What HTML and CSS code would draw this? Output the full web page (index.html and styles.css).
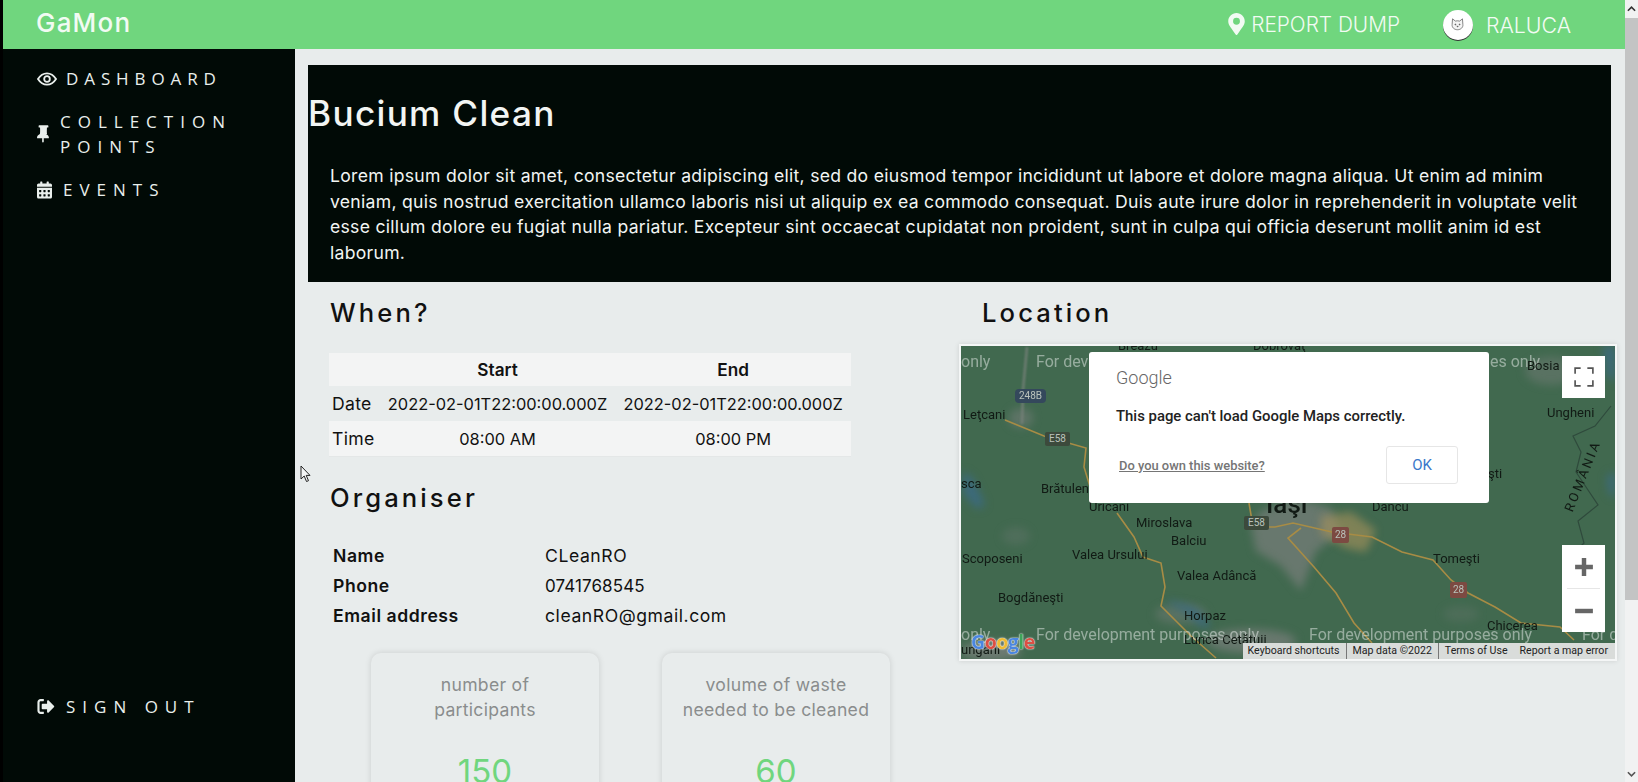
FILE: index.html
```html
<!DOCTYPE html>
<html lang="en">
<head>
    <meta charset="UTF-8">
    <meta name="viewport" content="width=device-width, initial-scale=1.0">
    <title>GaMon</title>
    <link rel="stylesheet" href="styles.css">
</head>
<body>
    <div class="app">
        <header class="topbar">
            <div class="brand">GaMon</div>
            <div class="topbar-right">
                <a class="report-link">
                    <svg class="pin-icon" viewBox="0 0 384 512"><path fill="currentColor" d="M172 502C27 291 0 262 0 192 0 86 86 0 192 0s192 86 192 192c0 70-27 99-172 310-9 14-31 14-40 0zm20-230a80 80 0 1 0 0-160 80 80 0 0 0 0 160z"/></svg>
                    REPORT DUMP
                </a>
                <div class="user">
                    <div class="avatar">
                        <svg viewBox="0 0 24 24" fill="#f4f4f4" stroke="#555" stroke-width="1" stroke-linejoin="round">
                            <path d="M5 4l4 3.2c2-.6 4-.6 6 0L19 4l.6 8c.6 4-3 7.4-7.6 7.4S3.800 16 4.400 12z"/>
                            <circle cx="9" cy="12" r=".7" fill="#444"/>
                            <circle cx="15" cy="12" r=".7" fill="#444"/>
                            <path d="M11 14.500h2l-1 1z" fill="#444"/>
                        </svg>
                    </div>
                    <span>RALUCA</span>
                </div>
            </div>
        </header>

        <div class="layout">
            <nav class="sidebar">
                <div class="nav-list">
                    <a class="nav-item nav-dashboard">
                        <svg class="nav-icon eye-icon" viewBox="0 0 24 16" fill="none" stroke="currentColor" stroke-width="2.2"><path d="M1.200 8C4 3.500 7.800 1.200 12 1.200S20 3.500 22.800 8C20 12.500 16.200 14.800 12 14.800S4 12.500 1.200 8z"/><circle cx="12" cy="8" r="3.4"/></svg>
                        <span>DASHBOARD</span>
                    </a>
                    <a class="nav-item nav-points">
                        <svg class="nav-icon pin-small" viewBox="0 0 384 512"><path fill="currentColor" d="M298 256c-7-40-9-66-4-192h26c9 0 16-7 16-16V16c0-9-7-16-16-16H64c-9 0-16 7-16 16v32c0 9 7 16 16 16h26c5 126 3 152-4 192-48 22-86 60-86 112 0 9 7 16 16 16h136v104l24 24 24-24V384h136c9 0 16-7 16-16 0-52-38-90-86-112z"/></svg>
                        <span>COLLECTION POINTS</span>
                    </a>
                    <a class="nav-item nav-events">
                        <svg class="nav-icon cal-icon" viewBox="0 0 448 512"><path fill="currentColor" d="M0 464c0 26 22 48 48 48h352c26 0 48-22 48-48V192H0zm320-196c0-7 5-12 12-12h40c7 0 12 5 12 12v40c0 7-5 12-12 12h-40c-7 0-12-5-12-12zm0 128c0-7 5-12 12-12h40c7 0 12 5 12 12v40c0 7-5 12-12 12h-40c-7 0-12-5-12-12zM192 268c0-7 5-12 12-12h40c7 0 12 5 12 12v40c0 7-5 12-12 12h-40c-7 0-12-5-12-12zm0 128c0-7 5-12 12-12h40c7 0 12 5 12 12v40c0 7-5 12-12 12h-40c-7 0-12-5-12-12zM64 268c0-7 5-12 12-12h40c7 0 12 5 12 12v40c0 7-5 12-12 12H76c-7 0-12-5-12-12zm0 128c0-7 5-12 12-12h40c7 0 12 5 12 12v40c0 7-5 12-12 12H76c-7 0-12-5-12-12zM400 64h-48V16c0-9-7-16-16-16h-32c-9 0-16 7-16 16v48H160V16c0-9-7-16-16-16h-32c-9 0-16 7-16 16v48H48C22 64 0 86 0 112v48h448v-48c0-26-22-48-48-48z"/></svg>
                        <span>EVENTS</span>
                    </a>
                </div>
                <a class="nav-item nav-signout">
                    <svg class="nav-icon out-icon" viewBox="0 0 512 448"><path fill="currentColor" d="M497 239L329 407c-15 15-41 5-41-17v-86H152c-13 0-24-11-24-24v-112c0-13 11-24 24-24h136V58c0-21 26-32 41-17l168 168c8 9 8 22 0 30zM192 436v-40c0-7-5-12-12-12H96c-18 0-32-14-32-32V96c0-18 14-32 32-32h84c7 0 12-5 12-12V12c0-7-5-12-12-12H96C43 0 0 43 0 96v256c0 53 43 96 96 96h84c7 0 12-5 12-12z"/></svg>
                    <span>SIGN OUT</span>
                </a>
            </nav>

            <main class="content">
                <section class="hero">
                    <h1>Bucium Clean</h1>
                    <p>Lorem ipsum dolor sit amet, consectetur adipiscing elit, sed do eiusmod tempor incididunt ut labore et dolore magna aliqua. Ut enim ad minim veniam, quis nostrud exercitation ullamco laboris nisi ut aliquip ex ea commodo consequat. Duis aute irure dolor in reprehenderit in voluptate velit esse cillum dolore eu fugiat nulla pariatur. Excepteur sint occaecat cupidatat non proident, sunt in culpa qui officia deserunt mollit anim id est laborum.</p>
                </section>

                <div class="columns">
                    <section class="col-left">
                        <h2>When?</h2>
                        <table class="when-table">
                            <tr>
                                <th></th>
                                <th>Start</th>
                                <th>End</th>
                            </tr>
                            <tr>
                                <td class="row-label">Date</td>
                                <td class="center">2022-02-01T22:00:00.000Z</td>
                                <td class="center">2022-02-01T22:00:00.000Z</td>
                            </tr>
                            <tr>
                                <td class="row-label">Time</td>
                                <td class="center">08:00 AM</td>
                                <td class="center">08:00 PM</td>
                            </tr>
                        </table>

                        <h2 class="organiser-title">Organiser</h2>
                        <table class="organiser-table">
                            <tr><th>Name</th><td>CLeanRO</td></tr>
                            <tr><th>Phone</th><td class="phone">0741768545</td></tr>
                            <tr><th>Email address</th><td>cleanRO@gmail.com</td></tr>
                        </table>

                        <div class="stats">
                            <div class="stat-card">
                                <div class="stat-label">number of participants</div>
                                <div class="stat-value">150</div>
                            </div>
                            <div class="stat-card">
                                <div class="stat-label">volume of waste needed to be cleaned</div>
                                <div class="stat-value">60</div>
                            </div>
                        </div>
                    </section>

                    <section class="col-right">
                        <h2>Location</h2>
                        <div class="map">
                            <svg class="map-art" viewBox="0 0 654 313">
                                <g class="soft" fill="#727c76">
                                    <path d="M300 165l35-13 35 10 10 25-25 18-15 40-20-25-25-15-5-25z" opacity=".8"/>
                                    <ellipse cx="55" cy="190" rx="14" ry="9" opacity=".3"/>
                                    <ellipse cx="220" cy="268" rx="26" ry="10" opacity=".5"/>
                                    <ellipse cx="60" cy="72" rx="12" ry="10" opacity=".6"/>
                                    <ellipse cx="500" cy="268" rx="18" ry="8" opacity=".25"/>
                                    <ellipse cx="590" cy="25" rx="26" ry="14" opacity=".5"/>
                                    <ellipse cx="30" cy="305" rx="30" ry="10" opacity=".9"/>
                                    <ellipse cx="290" cy="295" rx="45" ry="12" opacity=".8"/>
                                </g>
                                <path class="soft" d="M360 170l30-4 25 18-10 22-20-4-25-14z" fill="#a8935c" opacity=".6"/>
                                <g class="soft" fill="#3c6a7c">
                                    <path d="M2 125l10 8 12 26-8 4-14-16z"/>
                                    <path d="M208 254l26 8 16 18-8 2-18-16-16-8z"/>
                                    <path d="M642 0h12v36l-8-6z"/>
                                    <path d="M646 130l8-4v26l-6-5z"/>
                                </g>
                                <g fill="none" stroke="#2f4a3c" stroke-width="1.2">
                                    <path d="M650 60l-16 20-22 10 8 16-5 20 12 18 10 15-20 16 6 22-20 20 10 25"/>
                                </g>
                                <path class="soft-line" d="M66 1l-4 43-1 34" fill="none" stroke="#7a837c" stroke-width="2.5" opacity=".8"/>
                                <g fill="none" stroke="#a88c45" stroke-width="1.6">
                                    <path d="M44 74l39 16 42 12-2 19 7 23"/>
                                    <path d="M156 167l17 24 9 20 18 6 4 24-4 19 30 30 25 22"/>
                                    <path d="M288 157l4 24h22l18-4 39 9 40 5 30 15 31 8 18 20 17 13 27 14 26 16 39 4 14 13"/>
                                    <path d="M340 182l-13 10 26 29 22 26 18 30 18 20"/>
                                </g>
                            </svg>

                            <span class="dev-mark mark-a">only</span>
                            <span class="dev-mark mark-b">For dev</span>
                            <span class="dev-mark mark-c">es only</span>
                            <span class="dev-mark mark-d">only</span>
                            <span class="dev-mark mark-e">For development purposes only</span>
                            <span class="dev-mark mark-f">For development purposes only</span>
                            <span class="dev-mark mark-g">For d</span>

                            <span class="place place-1">Breazu</span>
                            <span class="place place-2">Dobrovăţ</span>
                            <span class="place place-3">Bosia</span>
                            <span class="place place-4">Ungheni</span>
                            <span class="place place-5">Leţcani</span>
                            <span class="place place-6">sca</span>
                            <span class="place place-7">Brătuleni</span>
                            <span class="place place-8">Uricani</span>
                            <span class="place place-9">Miroslava</span>
                            <span class="place place-10">Balciu</span>
                            <span class="place place-11">Valea Ursului</span>
                            <span class="place place-12">Scoposeni</span>
                            <span class="place place-13">Valea Adâncă</span>
                            <span class="place place-14">Bogdăneşti</span>
                            <span class="place place-15">Horpaz</span>
                            <span class="place place-16">Tomeşti</span>
                            <span class="place place-17">Chicerea</span>
                            <span class="place place-18">Dancu</span>
                            <span class="place place-19">şti</span>
                            <span class="place place-20">Lunca Cetăţuii</span>
                            <span class="place place-21">ungani</span>
                            <span class="place place-city">Iaşi</span>
                            <span class="place place-country">ROMÂNIA</span>

                            <span class="road-badge badge-blue badge-1">248B</span>
                            <span class="road-badge badge-2">E58</span>
                            <span class="road-badge badge-3">E58</span>
                            <span class="road-badge badge-red badge-4">28</span>
                            <span class="road-badge badge-red badge-5">28</span>

                            <div class="map-btn map-fullscreen">
                                <svg viewBox="0 0 18 18" fill="none" stroke="#555" stroke-width="1.5"><path d="M1 6V1h5M12 1h5v5M17 12v5h-5M6 17H1v-5"/></svg>
                            </div>
                            <div class="map-zoom">
                                <div class="zoom-btn">
                                    <svg viewBox="0 0 18 18"><path fill="#666" d="M7 1h4v6h6v4h-6v6H7v-6H1V7h6z"/></svg>
                                </div>
                                <div class="zoom-sep"></div>
                                <div class="zoom-btn">
                                    <svg viewBox="0 0 18 18"><path fill="#666" d="M1 7h16v4H1z"/></svg>
                                </div>
                            </div>

                            <div class="google-logo"><span class="g-blue">G</span><span class="g-red">o</span><span class="g-yellow">o</span><span class="g-blue">g</span><span class="g-green">l</span><span class="g-red">e</span></div>

                            <div class="attribution">
                                <span>Keyboard shortcuts</span>
                                <span>Map data ©2022</span>
                                <span>Terms of Use</span>
                                <span>Report a map error</span>
                            </div>

                            <div class="map-dialog">
                                <div class="dialog-logo">Google</div>
                                <div class="dialog-text">This page can't load Google Maps correctly.</div>
                                <div class="dialog-actions">
                                    <a class="dialog-link">Do you own this website?</a>
                                    <button class="dialog-ok">OK</button>
                                </div>
                            </div>
                        </div>
                    </section>
                </div>
            </main>
        </div>
    </div>

    <div class="scrollbar">
        <svg class="scroll-arrow" viewBox="0 0 10 6" fill="none" stroke="#333" stroke-width="1.8"><path d="M1 5l4-4 4 4"/></svg>
        <div class="scroll-thumb"></div>
        <svg class="scroll-arrow scroll-arrow-down" viewBox="0 0 10 6" fill="none" stroke="#555" stroke-width="1.8"><path d="M1 1l4 4 4-4"/></svg>
    </div>

    <svg class="cursor" viewBox="0 0 12 18"><path d="M1 1v13l3.200-3 2.300 5.500 2-.8-2.300-5.300H10z" fill="#f4f6f6" stroke="#222" stroke-width="1"/></svg>
</body>
</html>
```

FILE: styles.css
```css
/* General Styles */
* {
    box-sizing: border-box;
}

body {
    margin: 0;
    padding-left: 3px;
    height: 782px;
    display: flex;
    overflow: hidden;
    background: #000;
    font-family: 'Inter', sans-serif;
    color: #111;
}

.app {
    width: 1622px;
    height: 782px;
    display: flex;
    flex-direction: column;
    flex: none;
}

.cursor {
    position: absolute;
    left: 300px;
    top: 465px;
    width: 12px;
    height: 18px;
}

/* Top bar */
.topbar {
    height: 49px;
    flex: none;
    display: flex;
    justify-content: space-between;
    align-items: center;
    padding: 0 54px 0 33px;
    background: #70d67e;
    color: #f2fbf3;
}

.brand {
    font-size: 26px;
    font-weight: 500;
    letter-spacing: 1.2px;
    margin-top: -4px;
}

.topbar-right {
    display: flex;
    align-items: center;
    gap: 43px;
    font-size: 20.8px;
    font-weight: 300;
}

.report-link {
    display: flex;
    align-items: center;
    gap: 6px;
    margin-top: -1px;
}

.pin-icon {
    width: 17px;
    height: 22px;
}

.user {
    display: flex;
    align-items: center;
    gap: 13px;
    font-size: 21.3px;
}

.avatar {
    width: 30px;
    height: 30px;
    border-radius: 50%;
    background: #fff;
    display: flex;
    align-items: center;
    justify-content: center;
    box-shadow: 0 1px 0 #333;
}

.avatar svg {
    width: 17px;
    height: 17px;
}

/* Sidebar */
.layout {
    flex: 1;
    display: flex;
    min-height: 0;
}

.sidebar {
    width: 292px;
    flex: none;
    display: flex;
    flex-direction: column;
    justify-content: space-between;
    padding: 17px 20px 63px 34px;
    background: #010a06;
    color: #e9efec;
    font-family: 'Open Sans', sans-serif;
    font-size: 17px;
    letter-spacing: 7px;
    line-height: 25px;
}

.nav-item {
    display: flex;
    align-items: center;
}

.nav-dashboard {
    margin-bottom: 18px;
    letter-spacing: 5.9px;
}

.nav-points {
    margin-bottom: 18px;
}

.nav-icon {
    flex: none;
}

.eye-icon {
    width: 20px;
    height: 14px;
    margin-right: 9px;
}

.pin-small {
    width: 13px;
    height: 18px;
    margin-right: 10px;
}

.cal-icon {
    width: 15px;
    height: 18px;
    margin-right: 11px;
}

.out-icon {
    width: 18px;
    height: 15px;
    margin-right: 11px;
}

/* Main content */
.content {
    flex: 1;
    min-width: 0;
    overflow: hidden;
    padding: 16px 10px 0 13px;
    background: #e8ecec;
}

.hero {
    height: 217px;
    margin-right: 4px;
    padding-top: 28px;
    background: #010a06;
    color: #f2f5f3;
}

.hero h1 {
    margin: 0 0 30px;
    font-size: 35.2px;
    font-weight: 500;
    letter-spacing: 1.3px;
    line-height: 40px;
}

.hero p {
    margin: 0;
    padding: 0 22px;
    font-size: 17.6px;
    letter-spacing: 0.28px;
    line-height: 25.5px;
}

.columns {
    display: grid;
    grid-template-columns: 653px 654px;
}

h2 {
    margin: 0;
    font-size: 25.6px;
    font-weight: 500;
    letter-spacing: 3.1px;
    line-height: 30px;
}

.col-left {
    padding: 16px 0 0 22px;
}

.col-right {
    padding-top: 16px;
}

.col-right h2 {
    margin-left: 21px;
}

/* When table */
.when-table {
    width: 522px;
    margin: 25px 0 0 -1px;
    border-collapse: collapse;
    font-size: 16.4px;
}

.when-table th {
    height: 33px;
    font-size: 17.2px;
    font-weight: 600;
    background: #f3f4f4;
}

.when-table td {
    height: 35px;
    padding: 0 3px;
}

.when-table tr:last-child td {
    height: 35px;
    padding-top: 1px;
    background: #f3f4f4;
    border-bottom: 1px solid #e4e7e7;
}

.when-table .row-label {
    font-size: 17.6px;
    letter-spacing: 0.3px;
}

.center {
    text-align: center;
}

/* Organiser */
.organiser-title {
    margin-top: 26px;
}

.organiser-table {
    margin-top: 28px;
    border-collapse: collapse;
    font-size: 17.6px;
    letter-spacing: 0.55px;
}

.organiser-table th {
    width: 215px;
    height: 30px;
    padding: 0 0 0 3px;
    text-align: left;
    font-weight: 600;
}

.organiser-table td {
    padding: 0;
}

.organiser-table .phone {
    font-size: 17px;
    letter-spacing: 0.1px;
}

/* Stat cards */
.stats {
    display: flex;
    gap: 63px;
    margin: 22px 0 0 41px;
}

.stat-card {
    width: 228px;
    height: 200px;
    padding: 19px 17px;
    border-radius: 10px;
    text-align: center;
    box-shadow: 0 0 6px rgba(0, 0, 0, 0.13);
}

.stat-label {
    font-size: 17.6px;
    letter-spacing: 0.28px;
    line-height: 25.5px;
    color: #8a8d8d;
}

.stat-value {
    margin-top: 28px;
    font-size: 33px;
    font-weight: 400;
    color: #70d67e;
}

/* Map */
.map {
    position: relative;
    width: 654px;
    height: 313px;
    margin-top: 18px;
    overflow: hidden;
    background: #41694f;
    box-shadow: 0 0 0 2px #f4f6f6, 0 0 5px 2px rgba(0, 0, 0, 0.12);
    font-family: 'Roboto', sans-serif;
}

.map-art {
    position: absolute;
    inset: 0;
    width: 100%;
    height: 100%;
}

.soft {
    filter: blur(4px);
}

.soft-line {
    filter: blur(1px);
}

.dev-mark {
    position: absolute;
    font-size: 16px;
    line-height: 20px;
    white-space: nowrap;
    color: rgba(255, 255, 255, 0.45);
}

.mark-a { left: 0; top: 6px; }
.mark-b { left: 75px; top: 6px; }
.mark-c { left: 529px; top: 6px; }
.mark-d { left: 0; top: 279px; }
.mark-e { left: 75px; top: 279px; }
.mark-f { left: 348px; top: 279px; }
.mark-g { left: 621px; top: 279px; }

.place {
    position: absolute;
    font-size: 13px;
    line-height: 14px;
    white-space: nowrap;
    color: #111a14;
}

.place-1 { left: 157px; top: -7px; }
.place-2 { left: 292px; top: -7px; }
.place-3 { left: 566px; top: 13px; }
.place-4 { left: 586px; top: 60px; }
.place-5 { left: 2px; top: 62px; }
.place-6 { left: 0; top: 131px; }
.place-7 { left: 80px; top: 136px; }
.place-8 { left: 128px; top: 154px; }
.place-9 { left: 175px; top: 170px; }
.place-10 { left: 210px; top: 188px; }
.place-11 { left: 111px; top: 202px; }
.place-12 { left: 1px; top: 206px; }
.place-13 { left: 216px; top: 223px; }
.place-14 { left: 37px; top: 245px; }
.place-15 { left: 223px; top: 263px; }
.place-16 { left: 472px; top: 206px; }
.place-17 { left: 526px; top: 273px; }
.place-18 { left: 411px; top: 154px; }
.place-19 { left: 527px; top: 121px; }
.place-20 { left: 223px; top: 287px; }
.place-21 { left: 0; top: 297px; }

.place-city {
    left: 305px;
    top: 144px;
    font-size: 26px;
    line-height: 28px;
    font-weight: 500;
}

.place-country {
    left: 584px;
    top: 123px;
    font-size: 13px;
    letter-spacing: 2.5px;
    transform: rotate(-68deg);
}

.road-badge {
    position: absolute;
    padding: 0 4px;
    border-radius: 2px;
    font-size: 10px;
    line-height: 14px;
    color: #b9c2bb;
    background: #3c4a3c;
}

.badge-blue { background: #34485c; border-radius: 4px; }
.badge-red { background: #7c4a42; padding: 1px 3px; }
.badge-1 { left: 54px; top: 43px; }
.badge-2 { left: 84px; top: 86px; }
.badge-3 { left: 283px; top: 170px; }
.badge-4 { left: 371px; top: 181px; }
.badge-5 { left: 489px; top: 236px; }

.map-btn,
.map-zoom {
    position: absolute;
    left: 601px;
    width: 43px;
    background: #fff;
}

.map-fullscreen {
    top: 10px;
    height: 42px;
    display: flex;
    align-items: center;
    justify-content: center;
}

.map-fullscreen svg {
    width: 20px;
    height: 20px;
}

.map-zoom {
    top: 199px;
    height: 87px;
}

.zoom-btn {
    height: 43px;
    display: flex;
    align-items: center;
    justify-content: center;
}

.zoom-btn svg {
    width: 20px;
    height: 20px;
}

.zoom-sep {
    height: 1px;
    margin: 0 5px;
    background: #e6e6e6;
}

.google-logo {
    position: absolute;
    left: 10px;
    top: 283px;
    font-family: 'Open Sans', sans-serif;
    font-size: 19.5px;
    font-weight: 700;
    line-height: 26px;
    letter-spacing: -0.5px;
    text-shadow: 0 0 2px #fff, 0 0 1px #fff;
}

.g-blue { color: #4a86e0; }
.g-red { color: #dc5044; }
.g-yellow { color: #eebb33; }
.g-green { color: #3fa55a; }

.attribution {
    position: absolute;
    right: 0;
    bottom: 0;
    height: 16px;
    display: flex;
    align-items: center;
    padding: 0 7px 0 5px;
    background: #d9dcda;
    font-size: 10.6px;
    color: #222;
}

.attribution span {
    padding: 0 6px;
    border-left: 1px solid #777;
    line-height: 16px;
}

.attribution span:first-child {
    border-left: 0;
    padding-left: 0;
}

.attribution span:last-child {
    border-left: 0;
    padding-right: 0;
}

/* Map error dialog */
.map-dialog {
    position: absolute;
    left: 128px;
    top: 6px;
    width: 400px;
    height: 151px;
    padding: 15px 31px 0 27px;
    border-radius: 3px;
    background: #fff;
}

.dialog-logo {
    font-size: 18px;
    line-height: 22px;
    font-weight: 300;
    color: #666;
}

.dialog-text {
    margin-top: 18px;
    font-size: 14.9px;
    font-weight: 500;
    line-height: 18px;
    color: #222;
}

.dialog-actions {
    display: flex;
    justify-content: space-between;
    align-items: center;
    margin-top: 21px;
    padding-left: 3px;
}

.dialog-link {
    font-size: 12.9px;
    font-weight: 500;
    color: #757575;
    text-decoration: underline;
}

.dialog-ok {
    width: 72px;
    height: 38px;
    padding: 0;
    border: 1px solid #e6e6e6;
    border-radius: 3px;
    background: #fff;
    font-family: 'Roboto', sans-serif;
    font-size: 15px;
    color: #3a78c9;
}

/* Fake window scrollbar */
.scrollbar {
    width: 13px;
    flex: none;
    height: 782px;
    display: flex;
    flex-direction: column;
    align-items: center;
    background: #f1f2f2;
}

.scroll-arrow {
    width: 9px;
    height: 6px;
    margin: 6px 0;
    flex: none;
}

.scroll-thumb {
    width: 100%;
    height: 582px;
    background: #c3c4c4;
}

.scroll-arrow-down {
    margin-top: auto;
    margin-bottom: 5px;
}
```
